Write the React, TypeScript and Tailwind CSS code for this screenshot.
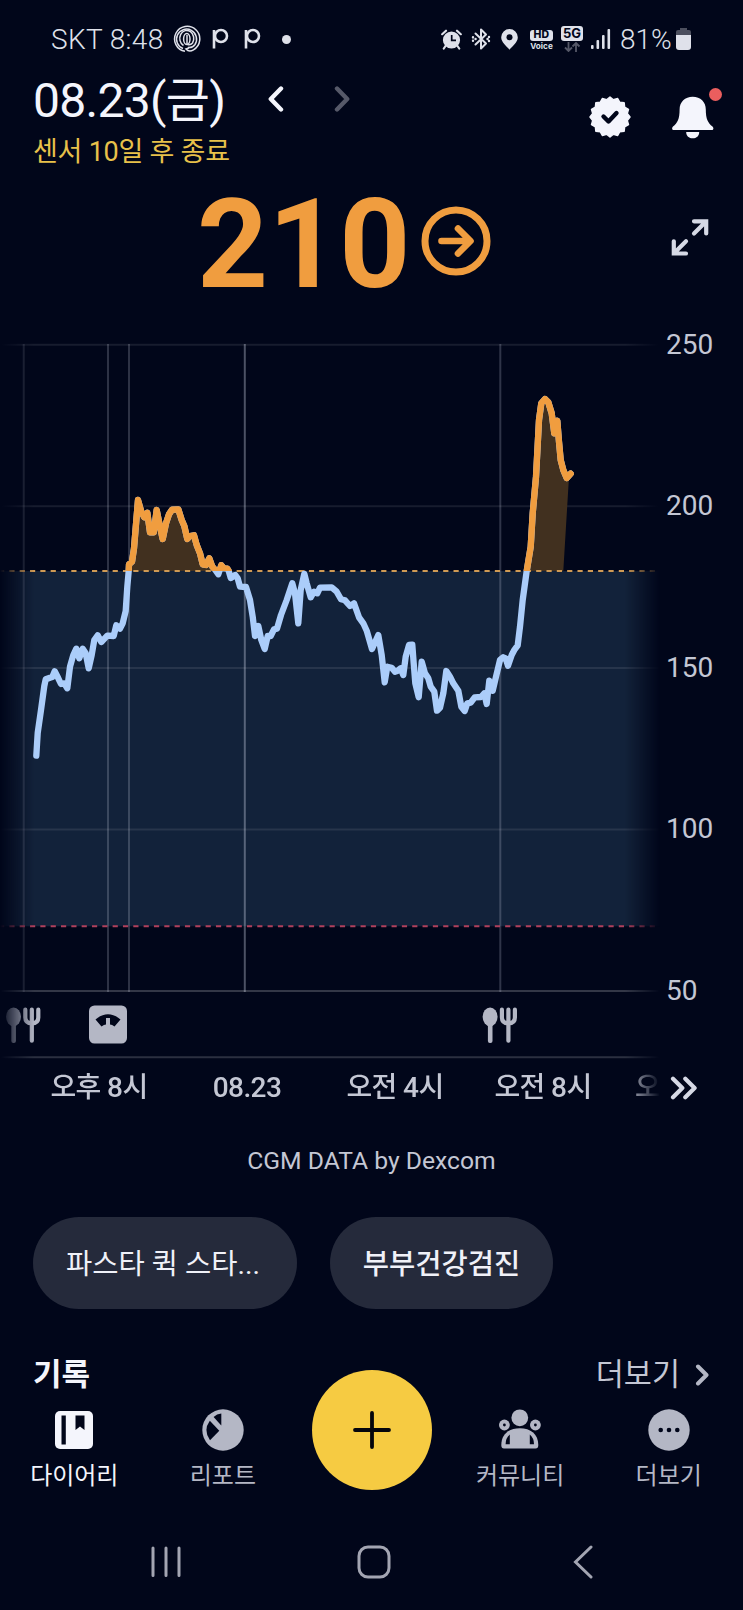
import type { ReactNode } from 'react';

const BG = '#01061a';
const ORANGE = '#f09d3f';
const BLUE = '#abcdfa';
const GRAY = '#b4b7c5';

const HIGH_Y = 241;
const LOW_Y = 596.3;

// glucose curve, x/y in chart units
const curve: [number, number][] = [
  [36.3, 425.7], [37.7, 403], [41, 380], [44.3, 356], [45.7, 349.3], [50, 347.7], [52.3, 347], [54.7, 341.3],
  [58.3, 348.3], [61, 354], [64.3, 353.3], [67.3, 358.3], [70, 336.7], [73.3, 325], [76.3, 318.7], [79.3, 328.3],
  [82.7, 318.7], [85.7, 323.3], [88.7, 338.3], [91.7, 325], [94.3, 310], [97.7, 305.3], [101.3, 312], [107.3, 305.7],
  [113.7, 306], [116.3, 295.3], [120, 298.7], [122.7, 293.3], [125.7, 281], [127.3, 256.7], [128.7, 241], [129, 234.3],
  [132, 231.7], [134, 218.3], [138, 170], [141.3, 181.7], [144.3, 187.3], [147.3, 182.7], [150, 202.3], [153.7, 202.3],
  [156.7, 180], [160, 196.7], [162.7, 209], [166, 193.3], [169, 184.3], [172, 179.7], [178.3, 179.3], [181.7, 190],
  [184.3, 196], [187.3, 209], [190, 206], [194, 205.3], [196.7, 215], [200, 223.3], [202.7, 234.3], [206, 235],
  [209.3, 228.3], [212.3, 236.7], [215.3, 240], [218.3, 244.3], [221.3, 235.3], [224, 238.3], [227.3, 238.7],
  [228.7, 241], [230.7, 248], [235.3, 245], [237.7, 248.3], [240, 256.7], [246, 257], [250, 270], [252.7, 286.7],
  [255, 306], [258.3, 296], [261.3, 310], [264.7, 319], [267.7, 306], [270.7, 306], [274, 299.3], [277, 298.7],
  [281, 285], [286.7, 270], [292.3, 253.3], [295, 263.3], [298.3, 293.3], [300.7, 260], [304.3, 243.8],
  [306.7, 253.3], [310.7, 267.3], [314, 261.7], [317.3, 263.3], [320, 257.7], [331.7, 257.3], [336.7, 261.7],
  [341, 269.3], [345, 270.3], [350, 276], [354, 273.3], [359, 287.3], [363.3, 293.3], [366.7, 300.7], [372, 319],
  [378.3, 305], [381.7, 325], [384.7, 352.3], [387.3, 336.7], [391.7, 337.7], [395, 341.7], [397.3, 341],
  [400.7, 338.3], [403.3, 345], [405.7, 326.7], [409, 315], [412.3, 314.7], [413.7, 333.3], [415.3, 353.3],
  [418.7, 367.3], [421.7, 331.7], [425, 343.3], [428.3, 348.3], [430.7, 356.7], [434.3, 361.7], [437, 380.7],
  [440, 377.7], [443.3, 363.3], [446.3, 341], [450, 346.7], [453.3, 353.3], [458.3, 360.7], [461.3, 376.7],
  [464.7, 381], [467.3, 373.3], [470.7, 372.7], [474.7, 367.3], [481, 367], [484.3, 363.3], [486.7, 374],
  [489.3, 350.7], [492.7, 360.7], [496, 346.7], [500, 330], [503.3, 327.3], [505.7, 328.3], [508, 335.7],
  [511.7, 325], [514.3, 320], [517.7, 315.3], [520, 296.7], [522.7, 270], [526.7, 241], [530.7, 216.7],
  [532.7, 183.3], [536, 146.7], [539, 90], [541.3, 73.3], [545, 69], [548.3, 72.3], [551.7, 83.3], [554.3, 103.3],
  [557.3, 90.7], [559, 111.7], [560.7, 130], [563.3, 140], [566.7, 148], [570.7, 143.7],
];

const toPoints = (pts: number[][]) => pts.map((p) => p.join(',')).join(' ');

const linePoints = toPoints(curve);
const areaPoints = toPoints([[36, 600], ...curve.slice(0, -1), [569, 147], [563.3, HIGH_Y], [563.3, 600]]);

const gridLines = [14.7, 176.3, 338, 499.5];
const markers = [
  { x: 23.7, opacity: 0.17 },
  { x: 108, opacity: 0.2 },
  { x: 129, opacity: 0.2 },
  { x: 244.8, opacity: 0.34 },
  { x: 500.3, opacity: 0.21 },
];

const badgePoints = toPoints(
  Array.from({ length: 32 }, (_, i) => {
    const r = i % 2 === 0 ? 20 : 17.6;
    const a = (i * Math.PI) / 16;
    return [21 + r * Math.sin(a), 21 - r * Math.cos(a)];
  }),
);

function Meal({ x }: { x: number }) {
  return (
    <g transform={`translate(${x} 677.5)`} fill={GRAY}>
      <ellipse cx="7.5" cy="9.3" rx="7.5" ry="9.3" />
      <rect x="5.3" y="15" width="4.6" height="20.5" rx="2" />
      <path
        d="M19.3 2.2V10q0 5.8 6.5 5.8T32.3 10V2.2M25.8 2.2V33.2"
        fill="none"
        stroke={GRAY}
        strokeWidth="4.2"
        strokeLinecap="round"
      />
    </g>
  );
}

function Chart() {
  return (
    <svg width="660" height="730" viewBox="0 0 660 730" className="block">
      <defs>
        <clipPath id="high">
          <rect x="0" y="0" width="660" height={HIGH_Y} />
        </clipPath>
      </defs>
      <rect x="0" y={HIGH_Y} width="660" height={LOW_Y - HIGH_Y} fill="#12223a" />
      {gridLines.map((y) => (
        <line key={y} x1="0" x2="660" y1={y} y2={y} stroke="#fff" strokeOpacity="0.09" strokeWidth="2" />
      ))}
      <line x1="0" x2="660" y1="661" y2="661" stroke="#fff" strokeOpacity="0.2" strokeWidth="2" />
      <line x1="0" x2="660" y1="727.3" y2="727.3" stroke="#fff" strokeOpacity="0.17" strokeWidth="2" />
      {markers.map((m) => (
        <line key={m.x} x1={m.x} x2={m.x} y1="14" y2="662" stroke="#dfe4f5" strokeOpacity={m.opacity} strokeWidth="2" />
      ))}
      <polygon points={areaPoints} fill="#41301f" clipPath="url(#high)" />
      <line x1="-1" x2="660" y1={HIGH_Y} y2={HIGH_Y} stroke="#cf9a54" strokeWidth="2" strokeDasharray="5.2 5.13" />
      <line x1="-1" x2="660" y1={LOW_Y} y2={LOW_Y} stroke="#b0405c" strokeWidth="2" strokeDasharray="5.2 5.13" />
      <g fill="none" strokeWidth="6.3" strokeLinejoin="round" strokeLinecap="round">
        <polyline points={linePoints} stroke={BLUE} />
        <polyline points={linePoints} stroke={ORANGE} clipPath="url(#high)" />
      </g>
      <Meal x={6} />
      <g transform="translate(89 675.5)">
        <rect width="38" height="38" rx="5.5" fill={GRAY} />
        <path d="M6.5 14Q19 3.500 31.500 14L25.500 21Q23 19 21 19V12.500H17V19Q15 19 12.500 21Z" fill={BG} />
      </g>
      <Meal x={482.6} />
    </svg>
  );
}

function StatusBar() {
  return (
    <div className="flex h-[78px] items-center justify-between pl-[51px] pr-[51px] text-[#dfe1ea]">
      <div className="flex items-center">
        <span className="mt-[2px] w-[112px] whitespace-nowrap text-[28px] font-light tracking-[0.35px]">SKT 8:48</span>
        <svg width="28" height="28" viewBox="0 0 28 28" fill="none" stroke="currentColor" strokeWidth="1.5" className="ml-[10px]">
          <path d="M12 26.300A12.600 12.600 0 1 1 20.500 24.800Q16 27.500 13 24Q15.500 23.500 16.500 22" />
          <path d="M10 23.500A10 10 0 1 1 22 19.500Q19.500 23 15.500 22.500" />
          <path d="M10.500 20.500A7 8 0 1 1 19.500 18Q17.500 20.500 14.500 19.500" />
          <ellipse cx="13.800" cy="14" rx="3.200" ry="5.500" />
          <path d="M14 10V19" />
        </svg>
        <svg width="50" height="22" viewBox="0 0 50 22" fill="none" stroke="currentColor" strokeWidth="2.600" className="ml-[11px]">
          <path d="M2 2V20.500" />
          <circle cx="9" cy="8" r="6" />
          <path d="M34 2V20.500" />
          <circle cx="41" cy="8" r="6" />
        </svg>
        <span className="ml-[20px] h-[9px] w-[9px] rounded-full bg-current" />
      </div>
      <div className="flex items-center">
        <svg width="21" height="21" viewBox="0 0 21 21">
          <circle cx="10.500" cy="11" r="8.600" fill="currentColor" />
          <path d="M1.200 5.200L5 1.700M19.800 5.200L16 1.700M4.500 17L2.800 19.500M16.500 17L18.200 19.500" stroke="currentColor" strokeWidth="2.200" strokeLinecap="round" />
          <path d="M10.700 6V11.300H15" fill="none" stroke={BG} strokeWidth="1.700" />
        </svg>
        <svg width="20" height="22" viewBox="0 0 20 22" fill="none" stroke="currentColor" strokeWidth="2" strokeLinejoin="round" strokeLinecap="round" className="ml-[9px]">
          <path d="M4.500 5.500L15 15.500L10 20.500V1.500L15 6.500L4.500 16.500" />
          <path d="M2 9.300v.1M4.500 11h.1M2 12.700v.1M18 9v.1M16.500 11h.1M18 13v.1" strokeWidth="2.400" />
        </svg>
        <svg width="17" height="21" viewBox="0 0 17 21" className="ml-[10px]">
          <path d="M8.500 0A8.300 8.300 0 0 1 16.800 8.300C16.800 13.500 11.500 17 8.500 20.800C5.500 17 .2 13.500 .2 8.300A8.300 8.300 0 0 1 8.500 0Z" fill="currentColor" />
          <circle cx="8.500" cy="8.300" r="3" fill={BG} />
        </svg>
        <div className="ml-[12px] mt-[2px] flex w-[23px] flex-col items-center">
          <span className="flex h-[11px] w-[23px] items-center justify-center rounded-[3px] bg-current">
            <span className="font-[Inter] text-[10.5px] font-extrabold leading-none tracking-wide text-[#01061a]">HD</span>
          </span>
          <span className="mt-px font-[Inter] text-[8.2px] font-bold leading-[9px]">Voice</span>
        </div>
        <div className="-mt-[1px] ml-[8px] flex w-[22px] flex-col items-center">
          <span className="flex h-[15px] w-[22px] items-center justify-center rounded-[3px] bg-current">
            <span className="font-[Inter] text-[13px] font-bold leading-none text-[#01061a]">5G</span>
          </span>
          <svg width="18" height="10" viewBox="0 0 18 10" fill="none" stroke="#555868" strokeWidth="1.800" className="mt-px">
            <path d="M5.500 0V9M2 5.500L5.500 9L9 5.500M13 10V1M9.500 4.500L13 1L16.500 4.500" />
          </svg>
        </div>
        <svg width="20" height="20" viewBox="0 0 20 20" fill="currentColor" className="ml-[8px]">
          <rect x="0" y="16" width="2.600" height="4" rx="1" />
          <rect x="5.500" y="11" width="2.600" height="9" rx="1" />
          <rect x="11" y="6" width="2.600" height="14" rx="1" />
          <rect x="16.500" y="0" width="2.600" height="20" rx="1" />
        </svg>
        <span className="ml-[9px] mt-[2px] w-[53px] whitespace-nowrap text-[28px] font-light">81%</span>
        <svg width="15" height="22" viewBox="0 0 15 22" className="ml-[3px] mr-px">
          <path d="M4 0H11V2H13Q15 2 15 4V8H0V4Q0 2 2 2H4Z" fill="#4c4f5e" />
          <path d="M0 7H15V19Q15 22 12 22H3Q0 22 0 19Z" fill="currentColor" />
        </svg>
      </div>
    </div>
  );
}

function Header() {
  return (
    <header className="flex h-[94px] justify-between pl-[33px] pr-[22px]">
      <div>
        <div className="flex h-[42px] items-center">
          <h1 className="mt-[3px] w-[190px] whitespace-nowrap text-[48px] leading-none tracking-[-0.7px] text-[#f4f5fc]">08.23(금)</h1>
          <svg width="16" height="26" viewBox="0 0 16 26" fill="none" stroke="#f4f5fc" strokeWidth="4.400" strokeLinecap="round" strokeLinejoin="round" className="ml-[45px]">
            <path d="M13 2.500L2.800 13L13 23.500" />
          </svg>
          <svg width="16" height="26" viewBox="0 0 16 26" fill="none" stroke="#565969" strokeWidth="4.400" strokeLinecap="round" strokeLinejoin="round" className="ml-[50px]">
            <path d="M3 2.500L13.200 13L3 23.500" />
          </svg>
        </div>
        <p className="mt-[13px] whitespace-nowrap text-[27px] leading-[38px] tracking-[-0.25px] text-[#e8c14a]">센서 10일 후 종료</p>
      </div>
      <div className="flex pt-[18px]">
        <svg width="42" height="42" viewBox="0 0 42 42">
          <polygon points={badgePoints} fill="#f4f5fc" stroke="#f4f5fc" strokeWidth="1.500" strokeLinejoin="round" />
          <path d="M14.500 20.500L19.500 25.500L27.500 17" fill="none" stroke={BG} strokeWidth="4.400" strokeLinecap="round" strokeLinejoin="round" />
        </svg>
        <div className="relative ml-[41px] w-[49px]">
          <svg width="42" height="43" viewBox="0 0 42 43" fill="#f4f5fc">
            <path d="M20.700 .8C28.500 .8 33.800 6 33.800 13.500C33.800 23 36 27 40.500 30.500C42 32 41.500 34 40 34H1.500C0 34-.5 32 1 30.500C5.500 27 7.600 23 7.600 13.500C7.600 6 13 .8 20.700 .8Z" />
            <path d="M14.200 36H27.200C27.200 40 24.500 42.300 20.700 42.300S14.200 40 14.200 36Z" />
          </svg>
          <span className="absolute -top-[8px] left-[37px] h-[13px] w-[13px] rounded-full bg-[#ea5e5e]" />
        </div>
      </div>
    </header>
  );
}

function Reading() {
  return (
    <section className="flex h-[158px] pl-[197px] pr-[33px]">
      <span className="mt-[11px] w-[214px] text-[124px] font-bold leading-[124px] text-[#f09d3f]">210</span>
      <svg width="70" height="70" viewBox="0 0 70 70" fill="none" stroke={ORANGE} strokeWidth="7" strokeLinecap="round" strokeLinejoin="round" className="ml-[10px] mt-[34px]">
        <circle cx="35" cy="35" r="31" />
        <path d="M20.500 35H49M37 22.500L49.500 35L37 47.500" strokeWidth="6.600" />
      </svg>
      <svg width="40" height="40" viewBox="0 0 40 40" fill="none" stroke="#d6d9e5" strokeWidth="4.200" strokeLinecap="round" className="ml-auto mt-[45px]">
        <path d="M24 4.300H36.200V16.500M35.500 5L24 16.500M16 36.500H3.800V24.300M4.500 35.800L16 24.300" />
      </svg>
    </section>
  );
}

function GlucosePanel() {
  return (
    <section className="flex h-[784px]">
      <div className="w-[660px] overflow-hidden [mask-image:linear-gradient(90deg,transparent_0,black_34px,black_625px,transparent_660px)]">
        <Chart />
        <div className="ml-[25px] flex h-[56px] w-[740px] items-center whitespace-nowrap text-center text-[28px] font-medium tracking-[-0.6px] text-[#c4c7d4]">
          <span className="w-[148px]">오후 8시</span>
          <span className="w-[148px]">08.23</span>
          <span className="w-[148px]">오전 4시</span>
          <span className="w-[148px]">오전 8시</span>
          <span className="pl-[18px]">오</span>
        </div>
      </div>
      <div className="flex w-[83px] flex-col pl-[6px] text-[28px] leading-[161.600px] text-[#c4c7d4]">
        <div className="-mt-[66.5px] flex flex-col">
          <span>250</span>
          <span>200</span>
          <span>150</span>
          <span>100</span>
          <span>50</span>
        </div>
        <svg width="28" height="24" viewBox="0 0 28 24" fill="none" stroke="#d6d9e5" strokeWidth="4.200" strokeLinecap="round" strokeLinejoin="round" className="ml-[4px] mt-[4.5px]">
          <path d="M3 2.800L12.300 12L3 21.200M15.300 2.800L24.600 12L15.300 21.200" />
        </svg>
      </div>
    </section>
  );
}

function Tab({ label, active, children }: { label: string; active?: boolean; children: ReactNode }) {
  return (
    <div className="flex flex-1 flex-col items-center">
      <div className="flex h-[44px] items-center">{children}</div>
      <span className={active ? 'mt-[6px] text-[24px] leading-[36px] text-[#f4f5fc]' : 'mt-[6px] text-[24px] leading-[36px] text-[#b4b7c5]'}>
        {label}
      </span>
    </div>
  );
}

function TabBar() {
  return (
    <nav className="flex h-[114px] pt-[11px]">
      <Tab label="다이어리" active>
        <svg width="38" height="38" viewBox="0 0 38 38">
          <rect width="38" height="38" rx="5" fill="#f4f5fc" />
          <rect x="6.500" y="4.500" width="4.300" height="29" fill={BG} />
          <path d="M20.500 4.500H29.500V19L25 15.500L20.500 19Z" fill={BG} />
        </svg>
      </Tab>
      <Tab label="리포트">
        <svg width="42" height="42" viewBox="0 0 42 42">
          <circle cx="21" cy="21" r="20.700" fill={GRAY} />
          <path d="M11.600 8Q14.800 5 19.300 4.600V16.500Z" fill={BG} />
          <path d="M7.800 11.800Q.8 21.500 8 31.200L17.300 21.800Z" fill={BG} />
        </svg>
      </Tab>
      <div className="flex flex-1 justify-center">
        <button className="-mt-[38px] ml-px flex h-[120px] w-[120px] items-center justify-center rounded-full bg-[#f6cb42]">
          <svg width="40" height="40" viewBox="0 0 40 40" stroke="#05060c" strokeWidth="3.800" strokeLinecap="round">
            <path d="M20 3V37M3 20H37" />
          </svg>
        </button>
      </div>
      <Tab label="커뮤니티">
        <svg width="42" height="42" viewBox="0 0 42 42" fill={GRAY}>
          <circle cx="20.800" cy="8.800" r="8.400" />
          <circle cx="5.400" cy="16" r="5.400" />
          <circle cx="36.400" cy="16" r="5.400" />
          <path d="M2.300 36C2.300 25 10 19.200 20.800 19.200S39.300 25 39.300 36Q39.300 39.500 36.500 39.500H5Q2.300 39.500 2.300 36Z" />
          <g fill={BG}>
            <circle cx="5.400" cy="16" r="1.400" />
            <circle cx="36.400" cy="16" r="1.400" />
            <path d="M10.800 25.500V35.300H6.600Q6.600 29 10.800 25.500ZM30.800 25.500V35.300H35Q35 29 30.800 25.500Z" />
          </g>
        </svg>
      </Tab>
      <Tab label="더보기">
        <svg width="42" height="42" viewBox="0 0 42 42">
          <circle cx="21" cy="21" r="20.700" fill={GRAY} />
          <g fill={BG}>
            <circle cx="12.700" cy="21" r="2.300" />
            <circle cx="21" cy="21" r="2.300" />
            <circle cx="29.300" cy="21" r="2.300" />
          </g>
        </svg>
      </Tab>
    </nav>
  );
}

export default function App() {
  return (
    <div className="flex h-[1610px] w-[743px] flex-col overflow-hidden bg-[#01061a] font-['Roboto','Noto_Sans_CJK_KR',sans-serif]">
      <StatusBar />
      <Header />
      <Reading />
      <GlucosePanel />

      <p className="mt-[30px] text-center text-[24.700px] leading-[34px] text-[#c4c7d4]">CGM DATA by Dexcom</p>

      <div className="mt-[39px] flex gap-[33px] pl-[33px] text-[28.500px] text-[#f0f1f8]">
        <span className="flex h-[92px] w-[264px] items-center whitespace-nowrap rounded-full bg-[#252a3b] pl-[33px] pt-[4px]">파스타 퀵 스타...</span>
        <span className="flex h-[92px] w-[223px] items-center justify-center whitespace-nowrap rounded-full bg-[#252a3b] pt-[4px] font-medium">부부건강검진</span>
      </div>

      <div className="mt-[44px] flex h-[44px] items-center justify-between pl-[33px] pr-[33px]">
        <h2 className="text-[31px] font-bold text-[#f4f5fc]">기록</h2>
        <div className="flex items-center text-[30.500px] text-[#c4c7d4]">
          더보기
          <svg width="15" height="22" viewBox="0 0 15 22" fill="none" stroke="#b4b7c5" strokeWidth="4" strokeLinecap="round" strokeLinejoin="round" className="ml-[15px]">
            <path d="M3 2.500L11.500 11L3 19.500" />
          </svg>
        </div>
      </div>

      <TabBar />

      <div className="mt-[34px] flex items-center pl-[151px] text-[#a3a5b2]">
        <svg width="30" height="34" viewBox="0 0 30 34" stroke="currentColor" strokeWidth="3" strokeLinecap="round">
          <path d="M2 3V30.500M15 3V30.500M28 3V30.500" />
        </svg>
        <svg width="34" height="34" viewBox="0 0 34 34" fill="none" stroke="currentColor" strokeWidth="3" className="ml-[176px]">
          <rect x="2" y="2" width="30" height="30" rx="9" />
        </svg>
        <svg width="20" height="34" viewBox="0 0 20 34" fill="none" stroke="currentColor" strokeWidth="3" strokeLinecap="round" className="ml-[182px]">
          <path d="M18 2L2.500 17L18 32" />
        </svg>
      </div>
    </div>
  );
}
